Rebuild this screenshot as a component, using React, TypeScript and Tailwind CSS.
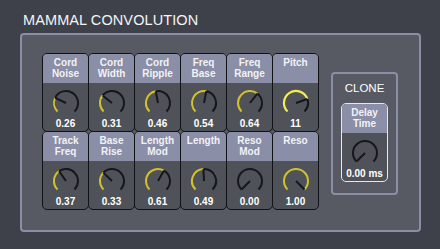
import React from "react"

const FONT = { fontFamily: '"Liberation Sans", Arial, sans-serif' }

type Param = { label: string[]; value: string; v: number; hot?: boolean }

const rowOne: Param[] = [
  { label: ["Cord", "Noise"], value: "0.26", v: 0.26 },
  { label: ["Cord", "Width"], value: "0.31", v: 0.31 },
  { label: ["Cord", "Ripple"], value: "0.46", v: 0.46 },
  { label: ["Freq", "Base"], value: "0.54", v: 0.54 },
  { label: ["Freq", "Range"], value: "0.64", v: 0.64 },
  { label: ["Pitch"], value: "11", v: 0.76, hot: true },
]

const rowTwo: Param[] = [
  { label: ["Track", "Freq"], value: "0.37", v: 0.37 },
  { label: ["Base", "Rise"], value: "0.33", v: 0.33 },
  { label: ["Length", "Mod"], value: "0.61", v: 0.61 },
  { label: ["Length"], value: "0.49", v: 0.49 },
  { label: ["Reso", "Mod"], value: "0.00", v: 0 },
  { label: ["Reso"], value: "1.00", v: 1 },
]

// knob: 270 degree sweep, gap at the bottom
function Knob({ v, hot }: { v: number; hot?: boolean }) {
  const cx = 14
  const cy = 14
  const r = 12
  const pt = (deg: number) => {
    const a = (deg * Math.PI) / 180
    return [cx + r * Math.sin(a), cy - r * Math.cos(a)]
  }
  const start = -135
  const end = 135
  const cur = start + v * 270
  const arc = (a: number, b: number) => {
    const [x1, y1] = pt(a)
    const [x2, y2] = pt(b)
    const large = b - a > 180 ? 1 : 0
    return `M ${x1} ${y1} A ${r} ${r} 0 ${large} 1 ${x2} ${y2}`
  }
  const [px, py] = pt(cur)
  const yellow = hot ? "#f3ec52" : "#d2c12c"
  return (
    <svg width="28" height="28" viewBox="0 0 28 28">
      {v < 1 && <path d={arc(cur, end)} fill="none" stroke="#15171c" strokeWidth="2" />}
      {v > 0 && <path d={arc(start, cur)} fill="none" stroke={yellow} strokeWidth={hot ? 2.2 : 2} />}
      <line x1={cx} y1={cy} x2={px} y2={py} stroke="#15171c" strokeWidth="2" />
    </svg>
  )
}

function Cell({ p, first, light }: { p: Param; first?: boolean; light?: boolean }) {
  return (
    <div
      className={`w-[47px] h-[79px] flex flex-col rounded-[5px] border overflow-hidden bg-[#4f5258] ${
        light ? "border-[#e6e7ee]" : "border-[#111216]"
      } ${first ? "" : "-ml-px"}`}
    >
      <div className="h-[29px] shrink-0 bg-[#8a8ea6] pt-[3px] text-center text-[10px] leading-[11px] font-bold text-[#f2f2f6]">
        {p.label.map((l) => (
          <div key={l}>{l}</div>
        ))}
      </div>
      <div className="flex flex-col items-center pt-[6px]">
        <Knob v={p.v} hot={p.hot} />
        <div className="mt-[1px] text-[10px] leading-[12px] font-bold text-white">{p.value}</div>
      </div>
    </div>
  )
}

export default function App() {
  return (
    <div className="w-[440px] h-[249px] bg-[#3e4149] overflow-hidden" style={FONT}>
      <div className="pl-[23px] pt-[12px] h-[33px] text-[14.5px] leading-[17px] text-[#f4f4f8] tracking-[0.1px]">
        MAMMAL CONVOLUTION
      </div>

      <div className="ml-[20px] w-[401px] h-[199px] rounded-[4px] border-2 border-[#8a8ea6] bg-[#575a62] pl-[20px] pt-[18px] flex items-start">
        {/* parameter grid */}
        <div className="flex flex-col">
          <div className="flex">
            {rowOne.map((p, i) => (
              <Cell key={p.label.join()} p={p} first={i === 0} />
            ))}
          </div>
          <div className="flex -mt-px">
            {rowTwo.map((p, i) => (
              <Cell key={p.label.join()} p={p} first={i === 0} />
            ))}
          </div>
        </div>

        {/* clone section */}
        <div className="ml-[12px] mt-[19px] w-[67px] h-[123px] rounded-[4px] border-2 border-[#8a8ea6] flex flex-col items-center">
          <div className="mt-[7px] text-[11.5px] leading-[14px] text-white">CLONE</div>
          <div className="mt-[8px]">
            <Cell p={{ label: ["Delay", "Time"], value: "0.00 ms", v: 0 }} first light />
          </div>
        </div>
      </div>
    </div>
  )
}
